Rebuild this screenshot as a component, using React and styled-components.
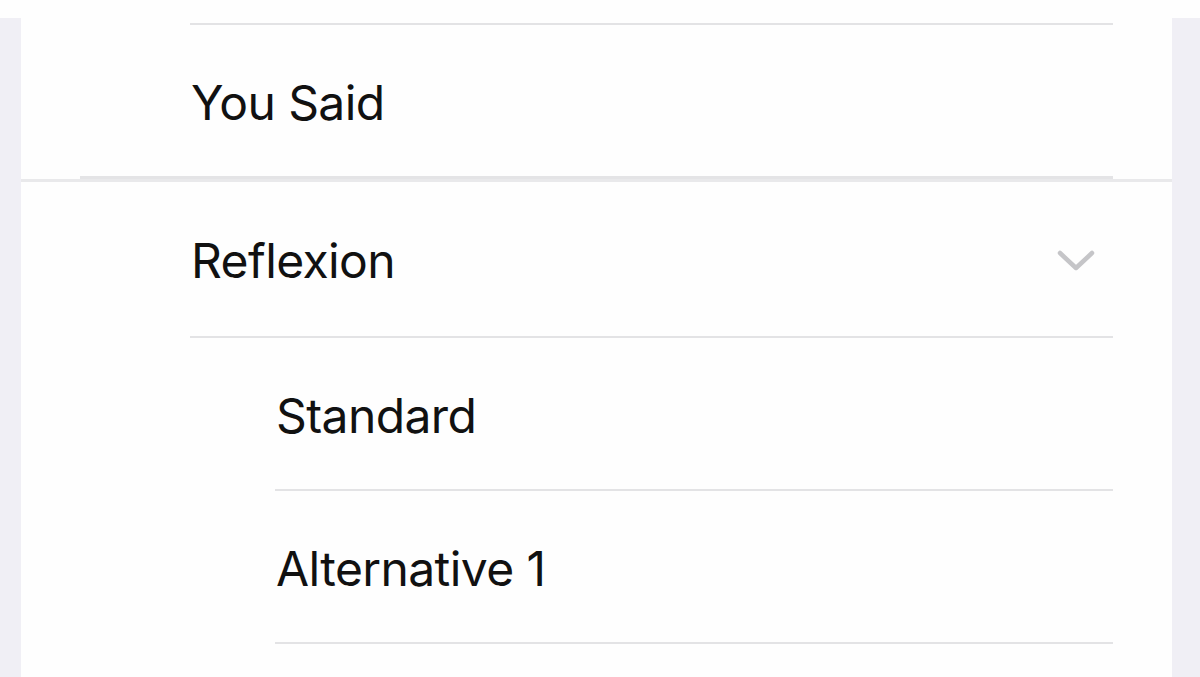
import React from "react";
import styled, { createGlobalStyle } from "styled-components";

const GlobalStyle = createGlobalStyle`
  html, body {
    margin: 0;
    padding: 0;
    background: #f0eff5;
    font-family: Inter, "Noto Sans", sans-serif;
    -webkit-font-smoothing: antialiased;
  }
`;

const Page = styled.div`
  width: 1200px;
  height: 677px;
  overflow: hidden;
  background: #f0eff5;
`;

const TopStrip = styled.div`
  height: 18px;
  background: #fefefe;
`;

const Card = styled.div`
  margin: 0 28px 0 21px;
  background: #fefefe;
  border-bottom: ${(p) => (p.$edge ? "3px solid #e9e9eb" : "none")};
`;

const Lead = styled.div`
  height: 5px;
`;

const Row = styled.div`
  height: ${(p) => p.$height || 152}px;
  display: flex;
  align-items: center;
  padding-left: ${(p) => p.$indent}px;
  padding-right: 77px;
  box-sizing: border-box;
`;

const Separator = styled.div`
  height: ${(p) => p.$thick || 2}px;
  background: ${(p) => p.$color || "#e3e3e5"};
  margin-left: ${(p) => p.$inset}px;
  margin-right: 59px;
`;

const Label = styled.span`
  flex: 1;
  font-size: 48px;
  font-weight: 400;
  color: #111;
  letter-spacing: -0.6px;
  padding-top: 3px;
`;

const Chevron = () => (
  <svg width="38" height="24" viewBox="0 0 38 24" fill="none">
    <path
      d="M3 4 L19 19 L35 4"
      stroke="#c5c5c8"
      strokeWidth="4.5"
      strokeLinecap="round"
      strokeLinejoin="round"
    />
  </svg>
);

const ChevronBox = styled.span`
  display: flex;
  margin-top: 4px;
`;

const options = ["Standard", "Alternative 1"];

export default function App() {
  return (
    <Page>
      <GlobalStyle />
      <TopStrip />
      <Card $edge>
        <Lead />
        <Separator $inset={169} />
        <Row $indent={170} $height={151}>
          <Label>You Said</Label>
        </Row>
        <Separator $inset={59} $thick={3} $color="#e4e4e6" />
      </Card>
      <Card>
        <Row $indent={170} $height={154}>
          <Label>Reflexion</Label>
          <ChevronBox>
            <Chevron />
          </ChevronBox>
        </Row>
        <Separator $inset={169} />
        {options.map((name) => (
          <React.Fragment key={name}>
            <Row $indent={255} $height={151}>
              <Label>{name}</Label>
            </Row>
            <Separator $inset={254} />
          </React.Fragment>
        ))}
        <Row $indent={255} $height={60} />
      </Card>
    </Page>
  );
}
